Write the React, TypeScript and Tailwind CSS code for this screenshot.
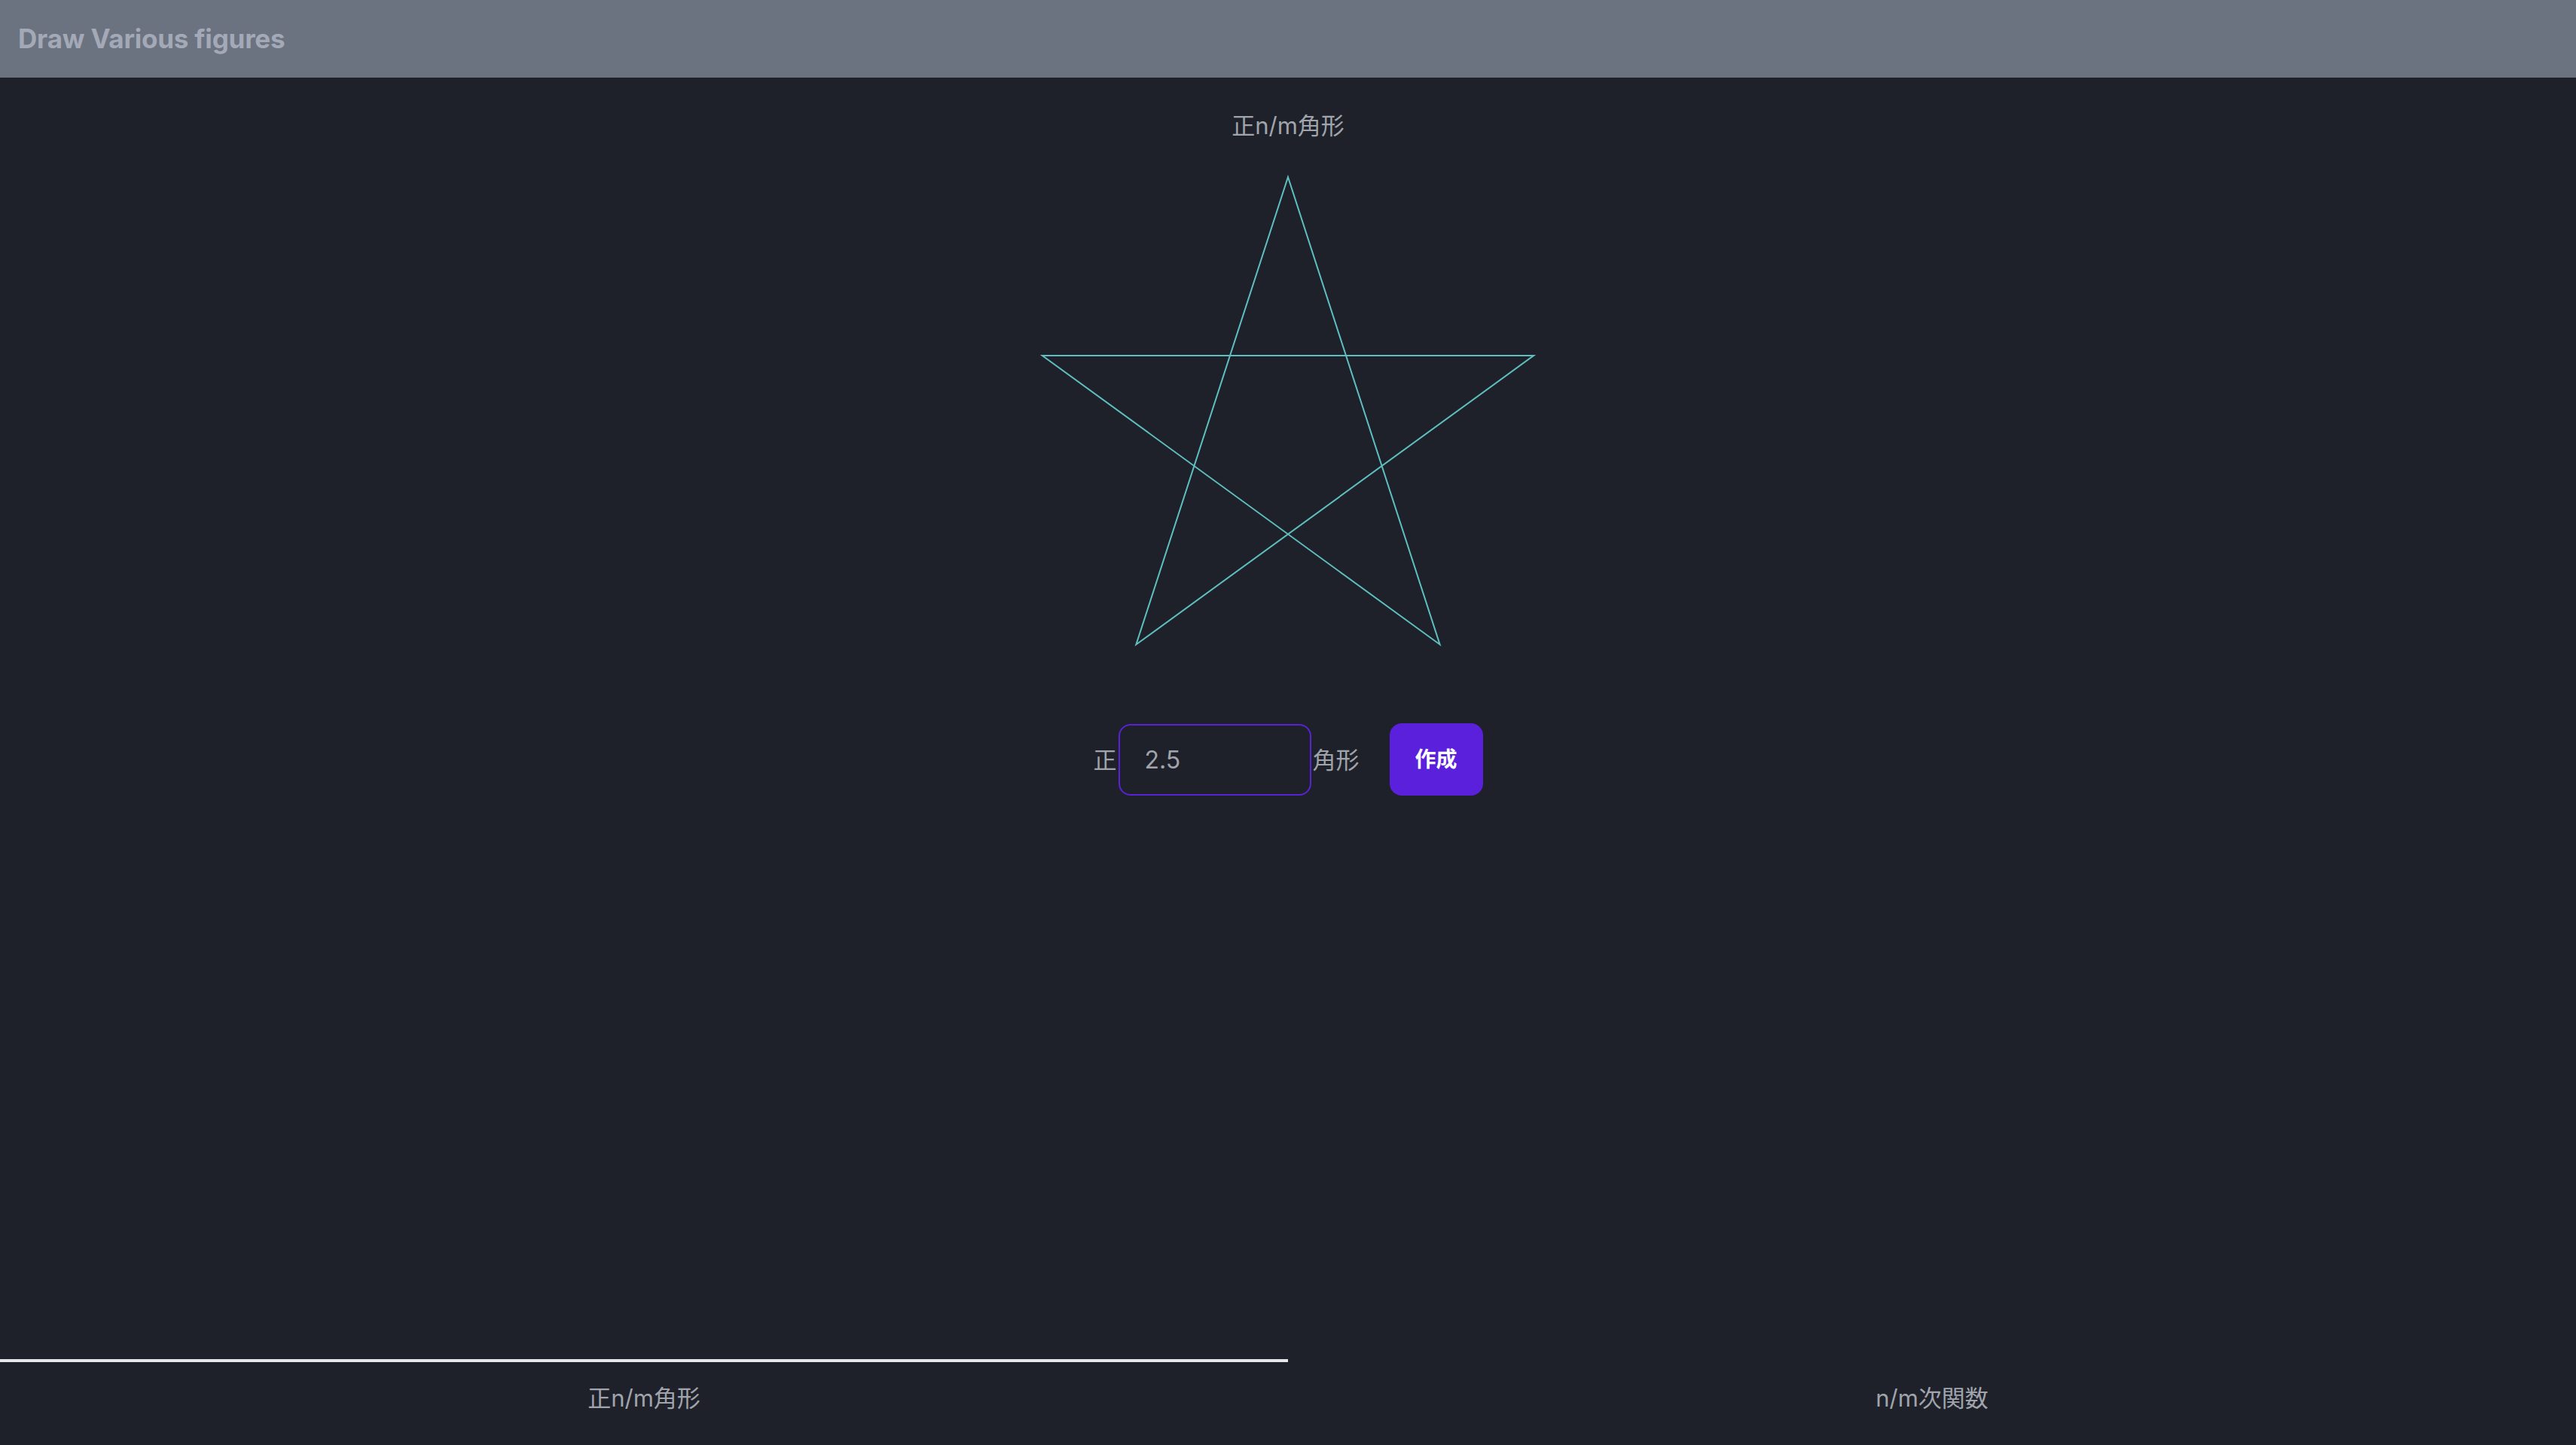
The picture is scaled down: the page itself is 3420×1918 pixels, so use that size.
import { useState } from 'react'

const font = '"Inter", "Noto Sans CJK JP", sans-serif'

// regular star polygon {n/m}, drawn into a 700x700 box
function starPoints(n: number, m: number, r: number, c: number) {
  const pts: string[] = []
  for (let i = 0; i < n; i++) {
    const a = -Math.PI / 2 + (2 * Math.PI * m * i) / n
    pts.push(`${(c + r * Math.cos(a)).toFixed(1)},${(c + r * Math.sin(a)).toFixed(1)}`)
  }
  return pts.join(' ')
}

const tabs = ['正n/m角形', 'n/m次関数']

export default function App() {
  const [value, setValue] = useState('2.5')
  const [active, setActive] = useState(0)

  return (
    <div className="flex h-screen flex-col bg-[#1e2129]" style={{ fontFamily: font }}>
      <header className="flex h-[103px] shrink-0 items-center bg-[#6b7280] px-[24px]">
        <h1 className="text-[35px] font-bold leading-none tracking-[-0.2px] text-[#a3a9b6]">Draw Various figures</h1>
      </header>

      <main className="flex flex-1 flex-col items-center pt-[40px]">
        <p className="text-[31px] leading-[48px] text-[#a0a4ac]">正n/m角形</p>

        <svg width="700" height="700" viewBox="0 0 700 700" className="mt-[37px]">
          <polygon
            points={starPoints(5, 2, 343, 350)}
            fill="none"
            stroke="#5fbfc0"
            strokeWidth="2"
            strokeLinejoin="miter"
          />
        </svg>

        <div className="mt-[32px] flex items-center text-[31px] text-[#a0a4ac]">
          <span className="leading-none">正</span>
          <input
            value={value}
            onChange={(e) => setValue(e.target.value)}
            className="ml-[2px] h-[95px] w-[256px] rounded-[16px] border-2 border-[#5a22d6] bg-transparent pl-[33px] text-[32px] text-[#a0a4ac] outline-none"
            style={{ fontFamily: font }}
          />
          <span className="ml-[2px] leading-none">角形</span>
          <button className="ml-[40px] h-[96px] w-[124px] rounded-[16px] bg-[#5b20dc] text-[28px] font-bold text-white">
            作成
          </button>
        </div>
      </main>

      <nav className="grid h-[114px] shrink-0 grid-cols-2">
        {tabs.map((t, i) => (
          <button
            key={t}
            onClick={() => setActive(i)}
            className={`flex justify-center border-t-4 pt-[24px] text-[31px] leading-[48px] text-[#a0a4ac] ${
              active === i ? 'border-[#e5e7eb]' : 'border-transparent'
            }`}
          >
            {t}
          </button>
        ))}
      </nav>
    </div>
  )
}
